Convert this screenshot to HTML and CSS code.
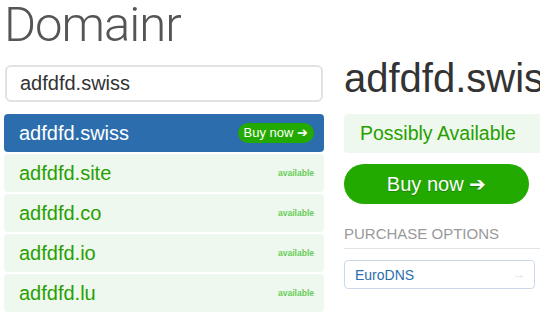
FILE: index.html
```html
<!DOCTYPE html>
<html lang="en">
<head>
  <meta charset="UTF-8">
  <title>Domainr</title>
  <link rel="stylesheet" href="styles.css">
</head>
<body>
  <div class="app">
    <div class="search-col">
      <h1 class="logo">Domainr</h1>
      <div class="search-box">adfdfd.swiss</div>
      <ul class="results">
        <li class="result selected">
          <span class="result-name">adfdfd.swiss</span>
          <span class="buy-small">Buy now &#10132;</span>
        </li>
        <li class="result">
          <span class="result-name">adfdfd.site</span>
          <span class="status">available</span>
        </li>
        <li class="result">
          <span class="result-name">adfdfd.co</span>
          <span class="status">available</span>
        </li>
        <li class="result">
          <span class="result-name">adfdfd.io</span>
          <span class="status">available</span>
        </li>
        <li class="result">
          <span class="result-name">adfdfd.lu</span>
          <span class="status">available</span>
        </li>
      </ul>
    </div>
    <div class="detail-col">
      <h2 class="detail-title">adfdfd.swiss</h2>
      <div class="availability">Possibly Available</div>
      <div class="buy-big">Buy now &#10132;</div>
      <div class="options-title">PURCHASE OPTIONS</div>
      <div class="option">
        <span>EuroDNS</span>
        <span class="option-arrow">&#8594;</span>
      </div>
    </div>
  </div>
</body>
</html>
```

FILE: styles.css
```css
body {
  margin: 0;
  font-family: 'Liberation Sans', Arial, sans-serif;
  background: #fff;
  overflow: hidden;
}
.app {
  display: flex;
  gap: 20px;
  padding-left: 4px;
}
.search-col {
  width: 320px;
  flex: none;
}
.logo {
  margin: -3px 0 12px 0;
  font-family: Roboto, 'Liberation Sans', sans-serif;
  font-size: 49px;
  line-height: 56px;
  font-weight: 300;
  letter-spacing: -1px;
  color: #555;
}
.search-box {
  margin: 0 1px 12px;
  height: 33px;
  line-height: 33px;
  padding-left: 13px;
  border: 2px solid #dfe4df;
  border-radius: 6px;
  font-size: 20px;
  color: #333;
}
.results {
  list-style: none;
  margin: 0;
  padding: 0;
  display: flex;
  flex-direction: column;
  gap: 2px;
}
.result {
  height: 38px;
  display: flex;
  align-items: center;
  justify-content: space-between;
  padding: 0 10px 0 15px;
  background: #eff8ee;
  border-radius: 4px;
}
.result-name {
  font-size: 20px;
  color: #27a000;
}
.status {
  font-size: 8.5px;
  font-weight: bold;
  color: #66cc55;
}
.result.selected {
  background: #2c6ead;
}
.result.selected .result-name {
  color: #fff;
}
.buy-small {
  height: 20px;
  line-height: 20px;
  padding: 0 6px;
  border-radius: 10px;
  background: #22aa00;
  color: #fff;
  font-size: 13px;
}
.detail-col {
  flex: 1;
  min-width: 0;
  padding-top: 56px;
}
.detail-title {
  margin: 0 0 14px;
  font-size: 40px;
  line-height: 44px;
  font-weight: normal;
  color: #333;
  white-space: nowrap;
  overflow: hidden;
}
.availability {
  height: 39px;
  line-height: 39px;
  padding-left: 16px;
  background: #eff8ee;
  border-radius: 4px 0 0 4px;
  font-size: 19.5px;
  color: #27a000;
}
.buy-big {
  margin-top: 11px;
  width: 185px;
  height: 40px;
  line-height: 40px;
  border-radius: 20px;
  background: #22aa00;
  color: #fff;
  text-align: center;
  font-size: 20px;
  text-shadow: 0 1px 1px rgba(0, 0, 0, 0.25);
}
.options-title {
  margin-top: 21px;
  padding-bottom: 5px;
  border-bottom: 1px solid #e2e4e2;
  font-size: 15px;
  line-height: 18px;
  color: #999;
}
.option {
  margin-top: 11px;
  width: 170px;
  height: 27px;
  display: flex;
  align-items: center;
  justify-content: space-between;
  padding: 0 9px 0 10px;
  border: 1px solid #c9d9e9;
  border-radius: 4px;
  font-size: 14px;
  color: #2c6ead;
}
.option-arrow {
  color: #dde;
  font-size: 13px;
}
```
